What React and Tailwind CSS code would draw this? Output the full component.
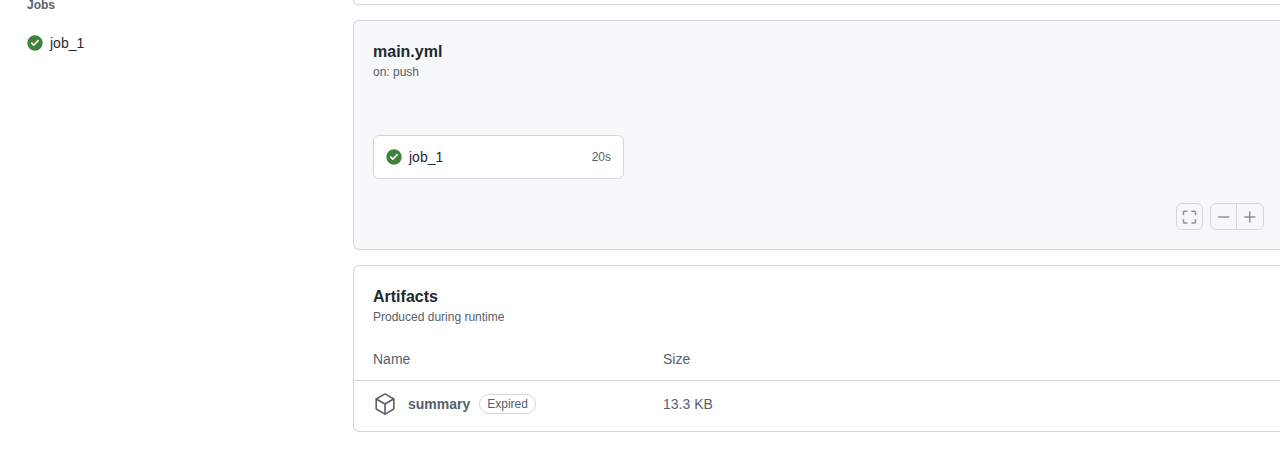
function SuccessIcon() {
  return (
    <svg viewBox="0 0 16 16" className="w-4 h-4 shrink-0 fill-[#40823a]" aria-label="Success" role="img">
      <path fillRule="evenodd" d="M8 15.700A7.700 7.700 0 1 0 8 .3a7.700 7.700 0 0 0 0 15.400Zm3.780-9.420a.85.85 0 0 0-1.200-1.200L6.750 8.900 5.420 7.580a.85.85 0 0 0-1.200 1.200l1.930 1.930a.85.85 0 0 0 1.200 0l4.430-4.430Z" />
    </svg>
  );
}

function ControlIcon({ d }) {
  return (
    <svg viewBox="0 0 16 16" className="w-4 h-4 fill-none stroke-[#8c959f] stroke-[1.6]" strokeLinecap="round" aria-hidden="true">
      <path d={d} />
    </svg>
  );
}

const FULL_SCREEN = 'M1.5 5.5V3q0-.8.8-.8H5M10 2.200h2.700q.8 0 .8.8v2.500M13.500 10.700v2.500q0 .8-.8.8H10M5 14H2.300q-.8 0-.8-.8v-2.500';
const MINUS = 'M2.800 8h9.900';
const PLUS = 'M2.800 8h9.900M7.750 3v10';

function PackageIcon() {
  return (
    <svg viewBox="0 0 24 24" className="w-6 h-6 shrink-0 fill-none stroke-[#57606a] stroke-[1.6]" strokeLinejoin="round" strokeLinecap="round" aria-hidden="true">
      <path d="M12.400 2.100l8 4.600a.8.8 0 0 1 .4.7v9.200a.8.8 0 0 1-.4.7l-8 4.600a.8.8 0 0 1-.8 0l-8-4.600a.8.8 0 0 1-.4-.7V7.400a.8.8 0 0 1 .4-.7l8-4.600a.8.8 0 0 1 .8 0Z" />
      <path d="M3.400 7 12 12l8.600-5M12 12v10" />
    </svg>
  );
}

function CardHeader({ title, subtitle }) {
  return (
    <header className="px-[19px] pt-5">
      <h2 className="text-base leading-[22px] font-bold">{title}</h2>
      <p className="text-xs leading-[18px] text-[#57606a]">{subtitle}</p>
    </header>
  );
}

const ARTIFACTS = [{ name: 'summary', size: '13.3 KB', expired: true }];

export default function App() {
  return (
    <div className="flex bg-white font-['Liberation_Sans',Arial,sans-serif] text-sm text-[#24292f]">
      {/* SIDEBAR */}
      <aside className="w-[353px] shrink-0 pl-[27px]">
        <h3 className="h-3 flex items-end text-xs leading-[14px] font-bold text-[#57606a]">Jobs</h3>
        <a href="#job_1" className="mt-5 flex items-center gap-[7px] leading-[22px]">
          <SuccessIcon />
          job_1
        </a>
      </aside>

      <main className="flex-1 min-w-0">
        {/* end of the run summary */}
        <div className="h-[5px] border border-t-0 border-r-0 border-[#d0d7de] rounded-bl-md" />

        {/* WORKFLOW GRAPH */}
        <section className="mt-[15px] border border-r-0 border-[#d0d7de] rounded-l-md bg-[#f6f8fa]">
          <CardHeader title="main.yml" subtitle="on: push" />
          <a
            href="#job_1"
            className="mx-[19px] mt-[54px] w-[251px] h-11 px-3 flex items-center gap-[7px] border border-[#d0d7de] rounded-md bg-white"
          >
            <SuccessIcon />
            <span className="flex-1">job_1</span>
            <span className="text-xs text-[#57606a]">20s</span>
          </a>
          <div className="mt-6 mb-[19px] mr-4 flex justify-end gap-[7px]">
            <button aria-label="Full screen" className="w-[27px] h-[27px] flex items-center justify-center border border-[#d5d8da] rounded-md">
              <ControlIcon d={FULL_SCREEN} />
            </button>
            <div className="flex border border-[#d5d8da] rounded-md">
              <button aria-label="Zoom out" className="w-[26px] h-[25px] flex items-center justify-center border-r border-[#d5d8da]">
                <ControlIcon d={MINUS} />
              </button>
              <button aria-label="Zoom in" className="w-[26px] h-[25px] flex items-center justify-center">
                <ControlIcon d={PLUS} />
              </button>
            </div>
          </div>
        </section>

        {/* ARTIFACTS */}
        <section className="mt-[15px] border border-r-0 border-[#d0d7de] rounded-l-md">
          <CardHeader title="Artifacts" subtitle="Produced during runtime" />
          <table className="mt-3 w-full table-fixed text-left text-[#57606a]">
            <thead>
              <tr className="h-[42px] border-b border-[#d0d7de]">
                <th className="w-[290px] pl-[19px] font-normal">Name</th>
                <th className="pl-[19px] font-normal">Size</th>
              </tr>
            </thead>
            <tbody>
              {ARTIFACTS.map(a => (
                <tr key={a.name} className="h-[51px]">
                  <td className="pl-[19px] pb-1">
                    <div className="flex items-center">
                      <PackageIcon />
                      <span className="ml-[11px] font-bold">{a.name}</span>
                      {a.expired && (
                        <span className="ml-[9px] px-[7px] border border-[#d0d7de] rounded-full text-xs leading-[18px]">
                          Expired
                        </span>
                      )}
                    </div>
                  </td>
                  <td className="pl-[19px] pb-1">{a.size}</td>
                </tr>
              ))}
            </tbody>
          </table>
        </section>
      </main>
    </div>
  );
}
